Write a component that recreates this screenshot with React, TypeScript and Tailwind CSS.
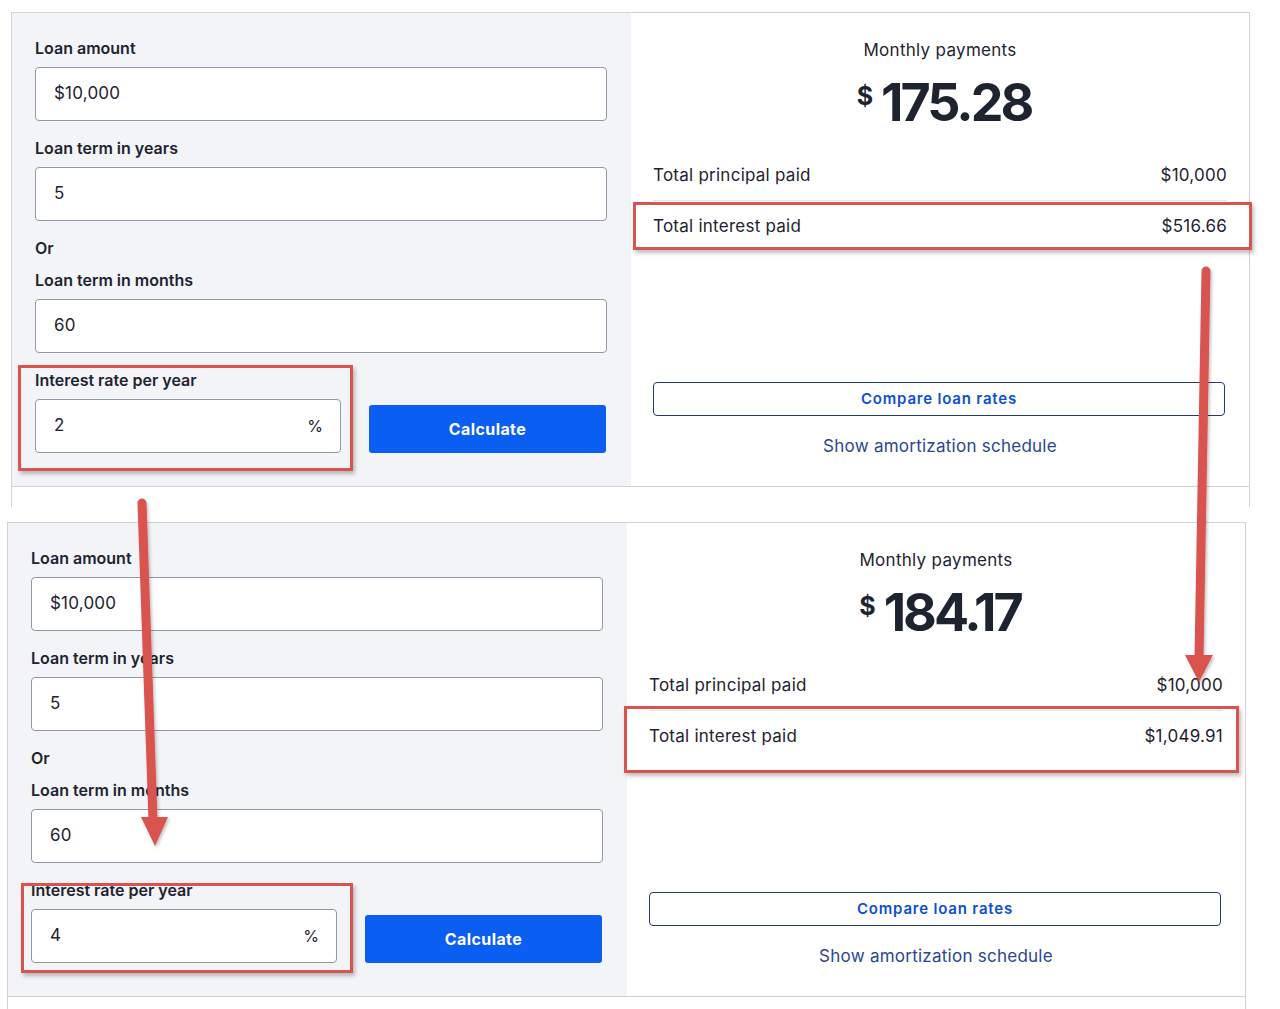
import React from "react";

type CalcProps = { rate: string; monthly: string; interest: string; className: string };

function Field({ label, value, extra }: { label: string; value: string; extra?: string }) {
  return (
    <div className={extra}>
      <div className="text-[16px] leading-5 font-semibold text-[#1e2330]">{label}</div>
      <div className="mt-[9px] h-[54px] w-full rounded-[4px] border border-[#9198a6] bg-white pl-[18px] flex items-center text-[17px] tracking-[0.2px] text-[#1e2330]">
        {value}
      </div>
    </div>
  );
}

function Calculator({ rate, monthly, interest, className }: CalcProps) {
  return (
    <div className={`w-[1239px] border-x border-t border-[#d8d0d5] ${className}`}>
      <div className="flex border-b border-[#d8d0d5]">
        <div className="w-[619px] shrink-0 bg-[#f3f4f8] pl-[23px] pr-[24px] pt-[25px] pb-[33px]">
          <Field label="Loan amount" value="$10,000" />
          <Field label="Loan term in years" value="5" extra="mt-[17px]" />
          <div className="mt-[17px] text-[16px] leading-5 font-semibold text-[#1e2330]">Or</div>
          <Field label="Loan term in months" value="60" extra="mt-[12px]" />
          <div className="mt-[17px] text-[16px] leading-5 font-semibold text-[#1e2330]">Interest rate per year</div>
          <div className="mt-[9px] flex items-end gap-[28px]">
            <div className="h-[54px] w-[306px] rounded-[4px] border border-[#9198a6] bg-white pl-[18px] pr-[17px] flex items-center justify-between text-[17px] text-[#1e2330]">
              <span>{rate}</span>
              <span className="text-[16px]">%</span>
            </div>
            <button className="h-[48px] w-[237px] rounded-[3px] bg-[#0a5ef2] text-white text-[16px] font-bold tracking-[0.4px]">
              Calculate
            </button>
          </div>
        </div>
        <div className="flex-1 bg-white px-[22px] pt-[25px]">
          <div className="text-center text-[17px] leading-6 tracking-[0.3px] text-[#1e2330]">Monthly payments</div>
          <div className="mt-[11px] pl-[8px] flex justify-center text-[#1e2330]">
            <span className="mt-[11px] mr-[8px] text-[25px] leading-6 font-bold">$</span>
            <span className="text-[52px] leading-[60px] font-bold tracking-[-3px]">{monthly}</span>
          </div>
          <div className="mt-[17px]">
            <div className="flex justify-between py-[13px] text-[17px] leading-6 tracking-[0.25px] text-[#1e2330] border-b border-[#e3e4e8]">
              <span>Total principal paid</span>
              <span>$10,000</span>
            </div>
            <div className="flex justify-between py-[13px] text-[17px] leading-6 tracking-[0.25px] text-[#1e2330]">
              <span>Total interest paid</span>
              <span>{interest}</span>
            </div>
          </div>
          <div className="mt-[131px] mr-[2px] h-[34px] rounded-[4px] border border-[#243b6b] flex items-center justify-center text-[15px] font-semibold tracking-[0.8px] text-[#0b4fd6]">
            Compare loan rates
          </div>
          <div className="mt-[18px] text-center text-[17px] leading-6 tracking-[0.25px] text-[#2a4690]">Show amortization schedule</div>
        </div>
      </div>
      <div className="h-[20px]" />
    </div>
  );
}

function RedBox({ className }: { className: string }) {
  return (
    <div
      className={`absolute border-[3px] border-[#d9534f] shadow-[2px_3px_4px_rgba(0,0,0,0.25)] ${className}`}
    />
  );
}

export default function App() {
  return (
    <div className="relative w-[1280px] h-[1009px] overflow-hidden bg-white pt-[12px] font-['Inter',sans-serif]">
      <Calculator rate="2" monthly="175.28" interest="$516.66" className="ml-[11px]" />
      <Calculator rate="4" monthly="184.17" interest="$1,049.91" className="ml-[7px] mt-[15px]" />

      <RedBox className="left-[18px] top-[365px] w-[335px] h-[106px]" />
      <RedBox className="left-[633px] top-[202px] w-[619px] h-[48px]" />
      <RedBox className="left-[21px] top-[883px] w-[332px] h-[90px]" />
      <RedBox className="left-[624px] top-[706px] w-[615px] h-[67px]" />

      <svg className="absolute left-0 top-0 pointer-events-none" width="1280" height="1009">
        <defs>
          <filter id="sh" x="-20%" y="-20%" width="140%" height="140%">
            <feDropShadow dx="1.5" dy="2" stdDeviation="1.5" floodColor="#000" floodOpacity="0.25" />
          </filter>
        </defs>
        <g filter="url(#sh)" fill="#d9534f" stroke="#d9534f">
          <line x1="142" y1="503" x2="153" y2="820" strokeWidth="9" strokeLinecap="round" />
          <polygon points="141,817 168,817 155,846" stroke="none" />
          <line x1="1206" y1="271" x2="1199" y2="658" strokeWidth="9" strokeLinecap="round" />
          <polygon points="1185,655 1213,655 1199,682" stroke="none" />
        </g>
      </svg>
    </div>
  );
}
